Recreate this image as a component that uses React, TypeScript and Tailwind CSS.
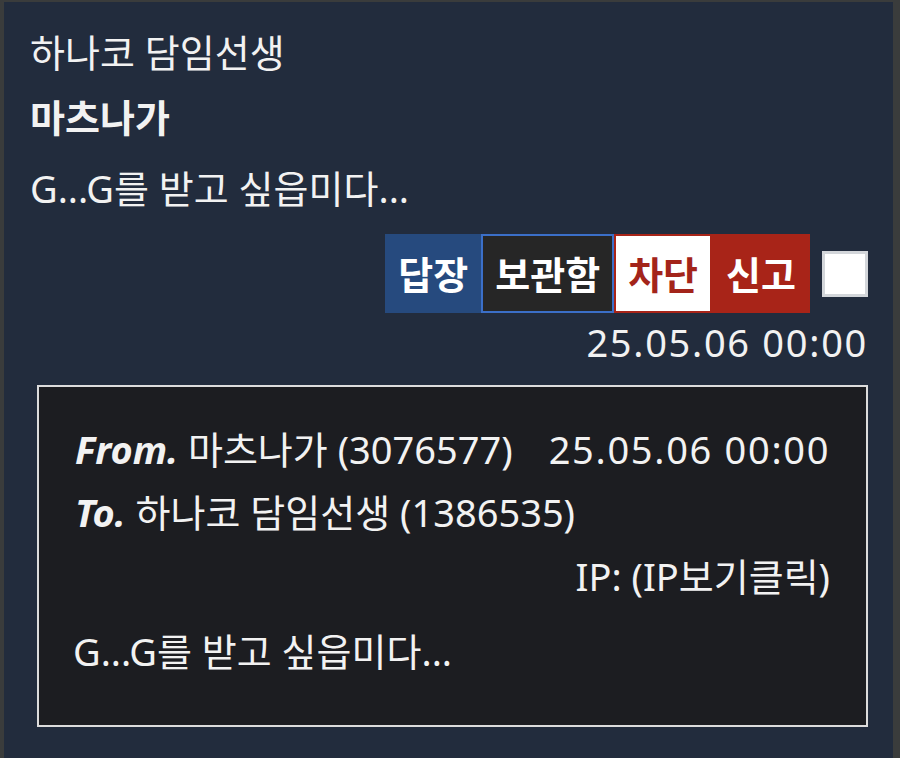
import React from 'react';

const font = { fontFamily: '"Noto Sans", "Noto Sans CJK KR", sans-serif' };

export default function App() {
  return (
    <div
      className="w-[900px] h-[758px] bg-[#3a3c3c] pl-[4px] pt-[2px] pr-[7px] text-[#f2f2f2] text-[38px] leading-[48px] overflow-hidden"
      style={font}
    >
      <div className="h-full bg-[#222c3d] pl-[26px] pr-[25px] pt-[26px]">
        <div>하나코 담임선생</div>
        <div className="mt-[17px] font-bold">마츠나가</div>
        <div className="mt-[23px]">G...G를 받고 싶읍미다...</div>

        {/* Actions */}
        <div className="mt-[22px] flex items-center justify-end">
          <button className="h-[79px] px-[11px] border-2 border-[#264a7e] bg-[#264a7e] font-bold text-white">
            답장
          </button>
          <button className="h-[79px] px-[12px] border-2 border-[#3b6fc8] bg-[#262626] font-bold text-white">
            보관함
          </button>
          <button className="h-[79px] px-[12px] border-2 border-[#a82418] bg-white font-bold text-[#a3241a]">
            차단
          </button>
          <button className="h-[79px] px-[12px] border-2 border-[#a82418] bg-[#a82418] font-bold text-white">
            신고
          </button>
          <div className="ml-[12px] w-[46px] h-[46px] bg-white border-[3px] border-[#d3d6da]" />
        </div>
        <div className="mt-[5px] text-right tracking-[1.7px]">25.05.06 00:00</div>

        {/* Message detail */}
        <div className="mt-[19px] ml-[7px] h-[342px] border-2 border-[#dcdcdc] bg-[#1c1d21] pl-[36px] pr-[36px] pt-[38px]">
          <div className="flex whitespace-nowrap">
            <span>
              <span className="font-bold italic">From.</span> 마츠나가 (3076577)
            </span>
            <span className="ml-[36px] tracking-[1.7px]">25.05.06 00:00</span>
          </div>
          <div className="mt-[15px]">
            <span className="font-bold italic">To.</span> 하나코 담임선생 (1386535)
          </div>
          <div className="mt-[16px] text-right">IP: (IP보기클릭)</div>
          <div className="mt-[27px] -ml-[2px]">G...G를 받고 싶읍미다...</div>
        </div>
      </div>
    </div>
  );
}
